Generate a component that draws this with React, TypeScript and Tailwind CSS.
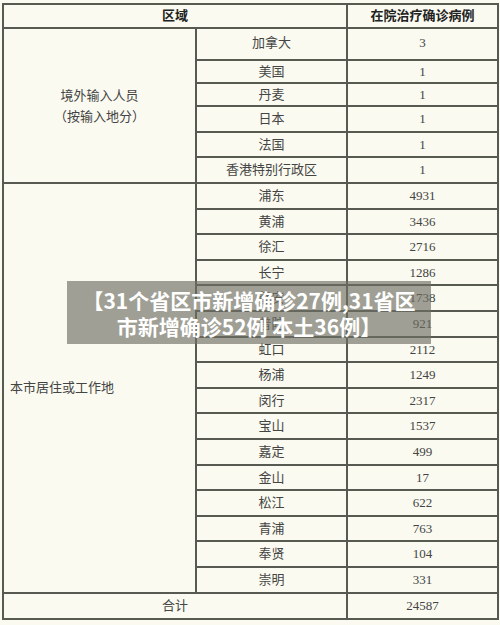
const abroad: [string, string, string][] = [
  ["加拿大", "3", "h-[32px] align-top pt-[4px]"],
  ["美国", "1", "h-[23px]"],
  ["丹麦", "1", "h-[23px]"],
  ["日本", "1", "h-[26px]"],
  ["法国", "1", "h-[25px]"],
  ["香港特别行政区", "1", "h-[26px]"],
];

const districts: [string, string][] = [
  ["浦东", "4931"],
  ["黄浦", "3436"],
  ["徐汇", "2716"],
  ["长宁", "1286"],
  ["静安", "1738"],
  ["普陀", "921"],
  ["虹口", "2112"],
  ["杨浦", "1249"],
  ["闵行", "2317"],
  ["宝山", "1537"],
  ["嘉定", "499"],
  ["金山", "17"],
  ["松江", "622"],
  ["青浦", "763"],
  ["奉贤", "104"],
  ["崇明", "331"],
];

const cell = "border-2 border-[#575a50] text-center";

export default function App() {
  return (
    <div className="relative h-[625px] w-[500px] overflow-hidden bg-[#fafaf0] pl-[2px] pt-[3px] text-[13px] text-[#444] [font-family:'Liberation_Serif','Noto_Sans_CJK_SC',serif]">
      <table className="w-[495px] table-fixed border-collapse border-2 border-[#575a50]">
        <colgroup>
          <col className="w-[193px]" />
          <col className="w-[151px]" />
          <col className="w-[151px]" />
        </colgroup>
        <tbody>
          <tr className="h-[24px]">
            <td colSpan={2} className={`${cell} font-bold text-[#222]`}>
              区域
            </td>
            <td className={`${cell} font-bold text-[#222]`}>在院治疗确诊病例</td>
          </tr>
          {abroad.map(([name, n, h], i) => (
            <tr key={name} className={h.split(" ")[0]}>
              {i === 0 && (
                <td rowSpan={6} className={`${cell} leading-[21px]`}>
                  境外输入人员
                  <br />
                  （按输入地分）
                </td>
              )}
              <td className={`${cell} ${h}`}>{name}</td>
              <td className={`${cell} ${h}`}>{n}</td>
            </tr>
          ))}
          {districts.map(([name, n], i) => (
            <tr key={name} className="h-[25.6px]">
              {i === 0 && (
                <td rowSpan={16} className="border-2 border-[#575a50] pl-[6px] text-left">
                  本市居住或工作地
                </td>
              )}
              <td className={cell}>{name}</td>
              <td className={cell}>{n}</td>
            </tr>
          ))}
          <tr className="h-[26px]">
            <td colSpan={2} className={cell}>
              合计
            </td>
            <td className={cell}>24587</td>
          </tr>
        </tbody>
      </table>

      {/* caption banner over the table */}
      <div className="absolute left-[67px] top-[281px] flex h-[63px] w-[364px] flex-col items-center justify-center bg-[rgba(110,110,100,0.65)] text-[21px] font-bold leading-[26px] text-white [font-family:'Noto_Sans_CJK_SC','Noto_Sans',sans-serif]">
        <div>【31个省区市新增确诊27例,31省区</div>
        <div>市新增确诊52例 本土36例】</div>
      </div>
    </div>
  );
}
